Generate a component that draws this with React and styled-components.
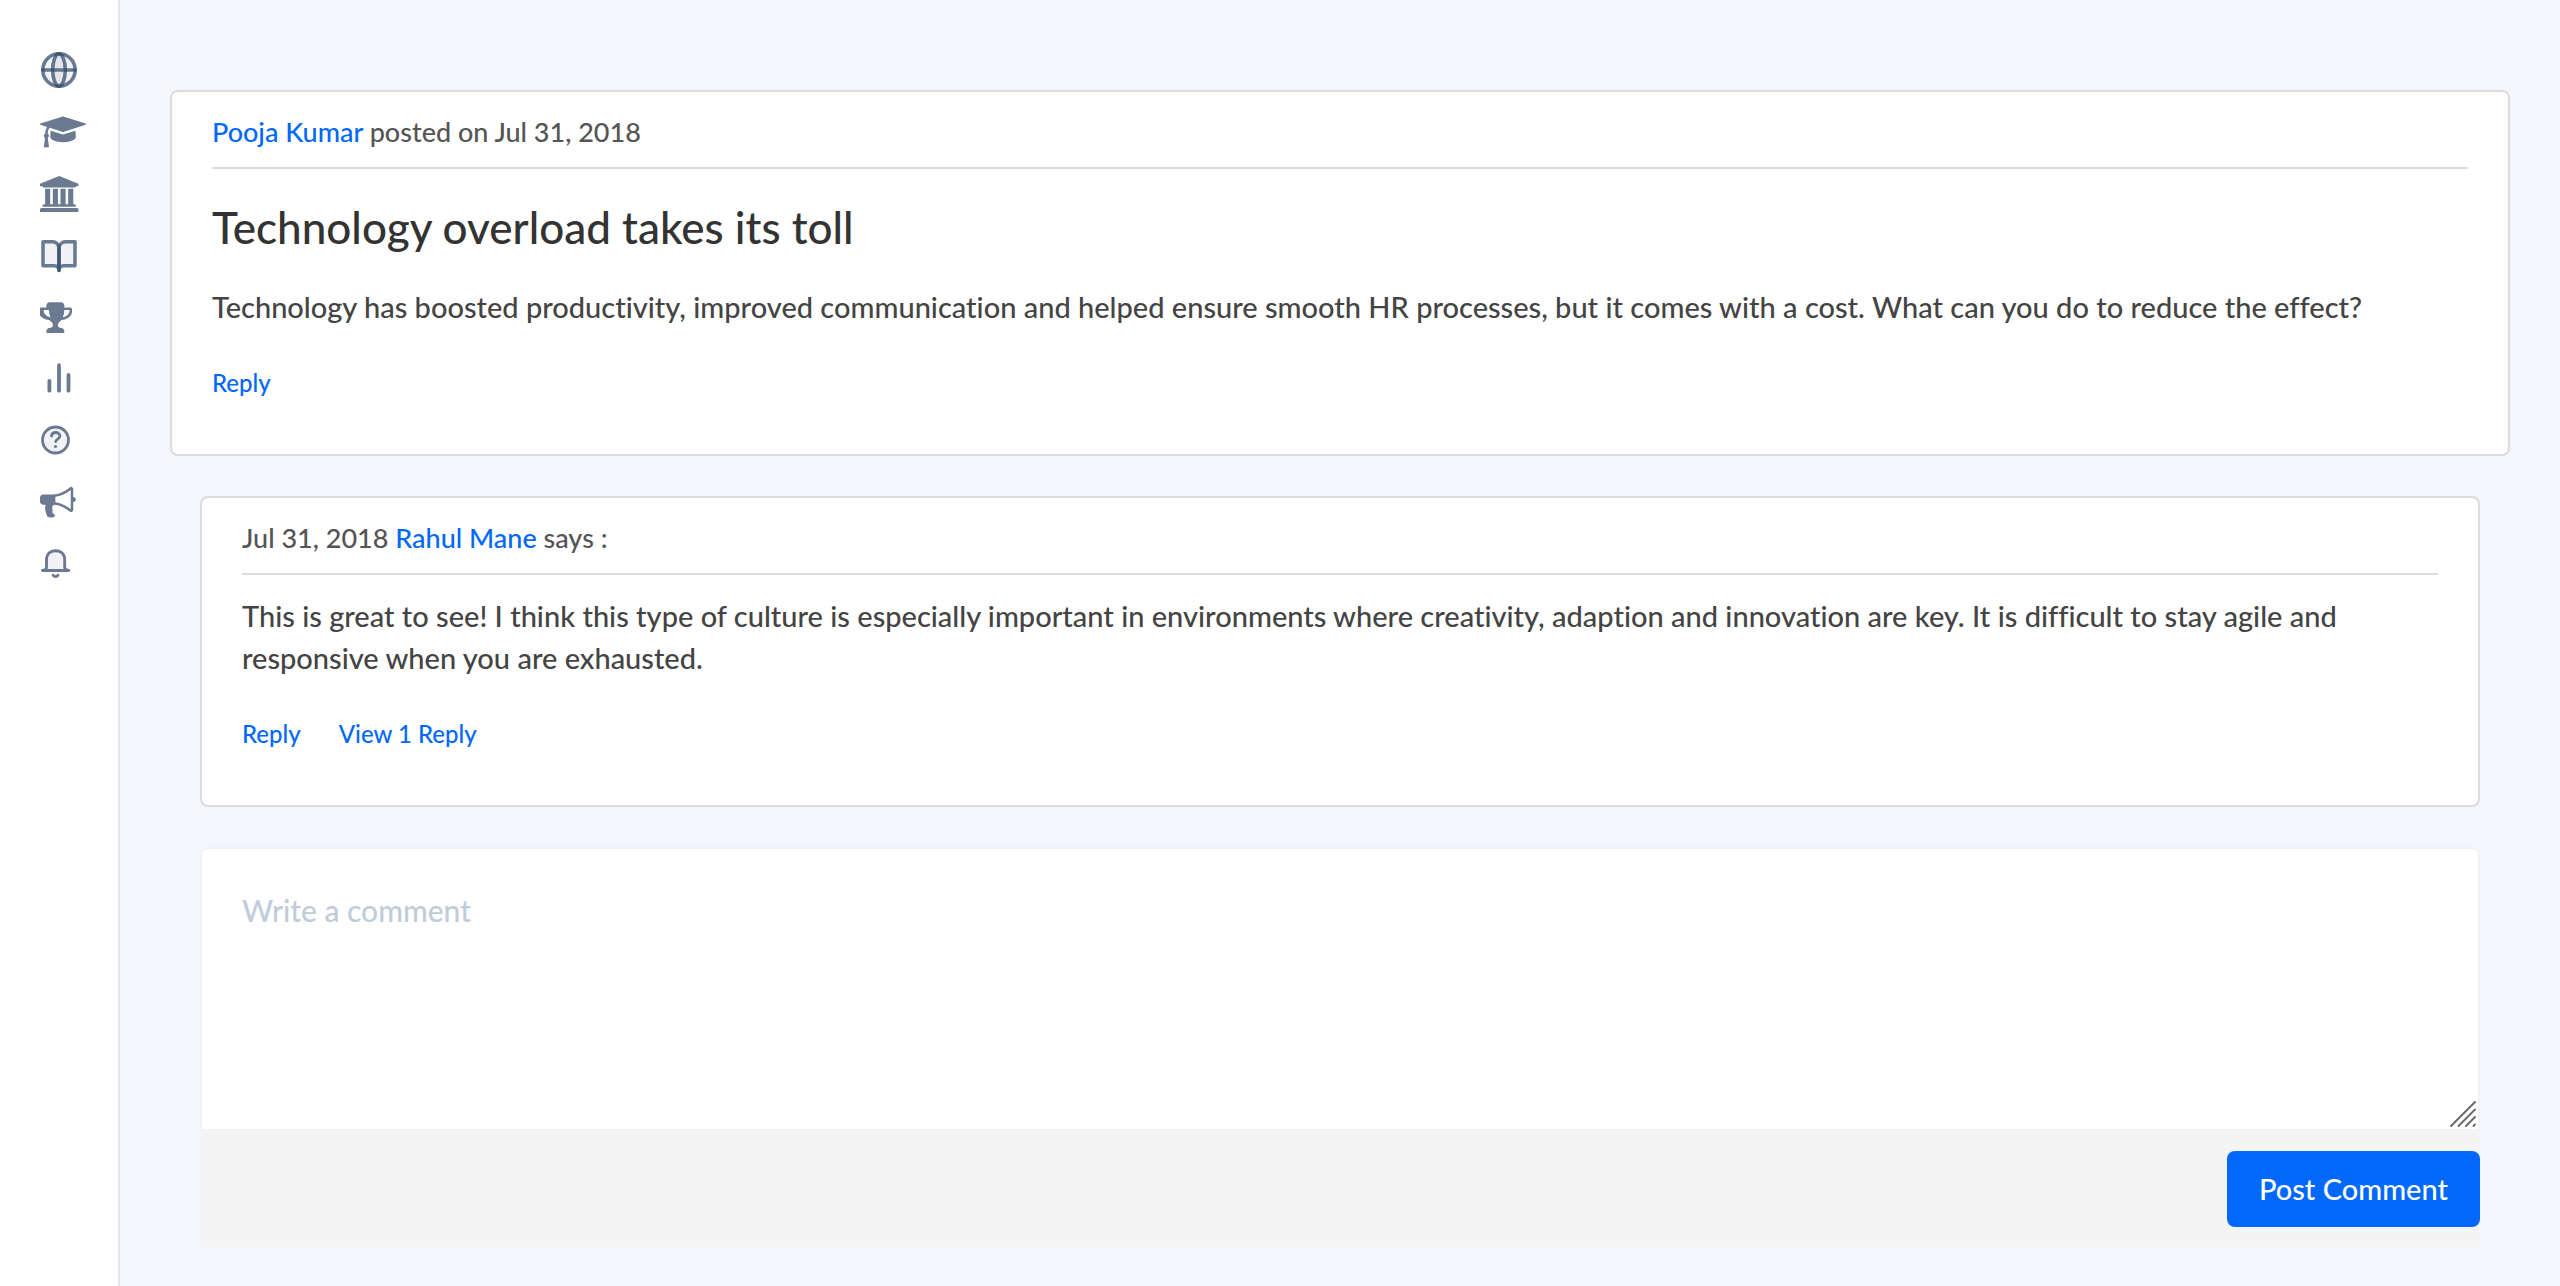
import React, { useState } from 'react';
import styled, { createGlobalStyle } from 'styled-components';

const GlobalStyle = createGlobalStyle`
  * {
    box-sizing: border-box;
  }

  body {
    margin: 0;
    background-color: #f4f6fb;
    color: #444;
    font-family: Lato, 'Open Sans', sans-serif;
    font-size: 29px;
    font-weight: 500;
    font-variant-ligatures: none;
    line-height: 42px;
  }
`;

const Page = styled.div`
  display: flex;
  min-height: 100vh;
`;

const Sidebar = styled.nav`
  flex: 0 0 120px;
  padding: 39px 0 0 40px;
  background-color: white;
  border-right: 2px solid #e3e7f0;
`;

const NavLink = styled.a`
  display: flex;
  align-items: center;
  height: 62px;
`;

const NavIcon = styled.svg`
  width: 48px;
  height: 40px;
  fill: none;
  stroke-linecap: round;
  stroke-linejoin: round;
`;

const Main = styled.main`
  flex: 1;
  min-width: 0;
  padding: 90px 50px 39px;
`;

const Card = styled.article`
  padding: 20px 40px 52px;
  background-color: white;
  border: 2px solid #dcdcdc;
  border-radius: 8px;
`;

const Thread = styled.section`
  display: flex;
  flex-direction: column;
  gap: 40px;
  margin-top: 40px;
  padding: 0 30px;
`;

const Meta = styled.header`
  padding-bottom: 15px;
  border-bottom: 2px solid #dcdcdc;
  color: #555;
  font-size: 27px;
  line-height: 40px;
`;

const Author = styled.a`
  color: #0168fa;
  text-decoration: none;
`;

const Title = styled.h1`
  margin: 33px 0 34px;
  color: #333;
  font-size: 44px;
  font-weight: 500;
  line-height: 50px;
`;

const Text = styled.p`
  margin: ${(props) => (props.$spaced ? '20px 0 0' : '0')};
`;

const Actions = styled.div`
  display: flex;
  gap: 38px;
  margin-top: 37px;
`;

const Action = styled.button`
  padding: 0 0 1px;
  background: none;
  border: none;
  color: #0168fa;
  font: inherit;
  font-size: 24px;
  line-height: 36px;
  cursor: pointer;
`;

const CommentForm = styled.form`
  background-color: #f4f4f4;
  border-radius: 8px;
`;

const Field = styled.div`
  position: relative;
`;

const CommentInput = styled.textarea`
  display: block;
  width: 100%;
  height: 284px;
  padding: 40px;
  background-color: white;
  border: 2px solid #f2f2f2;
  border-radius: 8px 8px 0 0;
  color: #444;
  font: inherit;
  font-size: 30px;
  resize: none;

  &::placeholder {
    color: #c0ccda;
    opacity: 1;
  }
`;

const Grip = styled.svg`
  position: absolute;
  right: 3px;
  bottom: 3px;
  width: 28px;
  height: 28px;
  stroke: #6b6b6b;
  stroke-width: 2;
  stroke-linecap: round;
  pointer-events: none;
`;

const FormFooter = styled.div`
  display: flex;
  justify-content: flex-end;
  padding: 20px 0;
`;

const PostButton = styled.button`
  padding: 17px 32px;
  background-color: #0168fa;
  border: none;
  border-radius: 8px;
  color: white;
  font: inherit;
  cursor: pointer;
`;

const tone = { stroke: 'rgba(49, 74, 107, 0.72)', fill: 'rgba(30, 40, 60, 0.06)' };
const solid = '#6b7a90';

const navItems = [
  {
    name: 'Explore',
    icon: (
      <g {...tone} strokeWidth="3.6">
        <circle cx="19" cy="20" r="16.2" />
        <ellipse cx="19" cy="20" rx="6.3" ry="16.2" />
        <path d="M2.8 20h32.4" />
      </g>
    ),
  },
  {
    name: 'Courses',
    icon: (
      <path
        fill={solid}
        transform="translate(0 2) scale(0.02)"
        d="M1774 836l18 316q4 69-82 128t-235 93.500-323 34.500-323-34.500-235-93.500-82-128l18-316 574 181q22 7 48 7t48-7zM2304 512q0 23-22 31l-1120 352q-4 1-10 1t-10-1l-652-206q-43 34-71 111.500t-34 178.500q63 36 63 109 0 69-58 107l58 433q2 14-8 25-9 11-24 11h-192q-15 0-24-11-10-11-8-25l58-433q-58-38-58-107 0-73 65-111 11-207 98-330l-333-104q-22-8-22-31t22-31l1120-352q4-1 10-1t10 1l1120 352q22 8 22 31z"
      />
    ),
  },
  {
    name: 'Institutes',
    icon: (
      <path
        fill={solid}
        transform="translate(0 -0.5) scale(0.02)"
        d="M960 128l960 384v128h-128q0 26-20.500 45t-48.500 19h-1526q-28 0-48.500-19t-20.500-45h-128v-128zM256 768h256v768h128v-768h256v768h128v-768h256v768h128v-768h256v768h59q28 0 48.500 19t20.500 45v64h-1664v-64q0-26 20.500-45t48.500-19h59v-768zM1851 1728q28 0 48.500 19t20.500 45v128h-1920v-128q0-26 20.500-45t48.500-19h1782z"
      />
    ),
  },
  {
    name: 'Library',
    icon: (
      <g {...tone} strokeWidth="2.2" transform="translate(-0.2 1) scale(1.6)">
        <path d="M2 3h6a4 4 0 0 1 4 4v14a3 3 0 0 0-3-3H2z" />
        <path d="M22 3h-6a4 4 0 0 0-4 4v14a3 3 0 0 1 3-3h7z" />
      </g>
    ),
  },
  {
    name: 'Achievements',
    icon: (
      <path
        fill={solid}
        transform="translate(0 1.7) scale(0.02)"
        d="M522 883q-74-162-74-371h-256v96q0 78 94.500 162t235.500 113zM1472 608v-96h-256q0 209-74 371 141-29 235.500-113t94.500-162zM1600 480v128q0 71-41.500 143t-112 130-173 97.500-215.500 44.500q-42 54-95 95-38 34-52.500 72.500t-14.500 89.500q0 54 30.500 91t97.500 37q75 0 133.500 45.500t58.500 114.500v64q0 14-9 23t-23 9h-832q-14 0-23-9t-9-23v-64q0-69 58.500-114.500t133.500-45.500q67 0 97.500-37t30.500-91q0-51-14.500-89.500t-52.500-72.500q-53-41-95-95-113-5-215.500-44.500t-173-97.500-112-130-41.500-143v-128q0-40 28-68t68-28h288v-96q0-66 47-113t113-47h576q66 0 113 47t47 113v96h288q40 0 68 28t28 68z"
      />
    ),
  },
  {
    name: 'Statistics',
    icon: <path stroke={solid} strokeWidth="3.8" d="M9.4 21v9.7M19 5.2v25.5M28.5 14.8v15.9" />,
  },
  {
    name: 'Help',
    icon: (
      <g {...tone} strokeWidth="2.8">
        <circle cx="15.5" cy="18" r="13" />
        <path fill="none" d="M11.5 14c.2-2.2 1.9-3.5 4.2-3.5 2.4 0 4.2 1.5 4.2 3.6 0 3-3.7 2.9-4.2 5.5" />
        <circle cx="15.5" cy="24.5" r="1.6" fill={solid} stroke="none" />
      </g>
    ),
  },
  {
    name: 'Announcements',
    icon: (
      <path
        fill={solid}
        transform="translate(0 0.2) scale(0.02)"
        d="M1664 640q53 0 90.500 37.500t37.500 90.500-37.500 90.500-90.500 37.500v384q0 52-38 90t-90 38q-417-347-812-380-58 19-91 66t-31 100.500 40 92.500q-20 33-23 65.500t6 58 33.500 55 48 50 61.500 50.500q-29 58-111.500 83t-168.500 11.500-132-55.500q-7-23-29.500-87.500t-32-94.500-23-89-15-101 3.500-98.500 22-110.500h-122q-66 0-113-47t-47-113v-192q0-66 47-113t113-47h480q435 0 896-384 52 0 90 38t38 90v384zM1536 1244v-954q-394 302-768 343v270q377 42 768 341z"
      />
    ),
  },
  {
    name: 'Notifications',
    icon: (
      <g {...tone} stroke={solid} strokeWidth="2.9">
        <path d="M2.5 24.5c2.500 0 4-1.200 4-3.500v-7c0-5.500 3.500-9.200 9.100-9.200s9.100 3.700 9.100 9.200v7c0 2.300 1.500 3.500 4 3.500z" />
        <path fill="none" d="M13.2 29.3c1.200 1.800 3.600 1.800 4.800 0" />
      </g>
    ),
  },
];

function App() {
  const [comment, setComment] = useState('');

  const handleSubmit = (e) => {
    e.preventDefault();
    setComment('');
  };

  return (
    <>
      <GlobalStyle />
      <Page>
        <Sidebar>
          {navItems.map((item) => (
            <NavLink key={item.name} href="#" aria-label={item.name}>
              <NavIcon viewBox="0 0 48 40">{item.icon}</NavIcon>
            </NavLink>
          ))}
        </Sidebar>
        <Main>
          <Card>
            <Meta>
              <Author href="#">Pooja Kumar</Author> posted on Jul 31, 2018
            </Meta>
            <Title>Technology overload takes its toll</Title>
            <Text>
              Technology has boosted productivity, improved communication and helped ensure smooth HR
              processes, but it comes with a cost. What can you do to reduce the effect?
            </Text>
            <Actions>
              <Action type="button">Reply</Action>
            </Actions>
          </Card>
          <Thread>
            <Card>
              <Meta>
                Jul 31, 2018 <Author href="#">Rahul Mane</Author> says :
              </Meta>
              <Text $spaced>
                This is great to see! I think this type of culture is especially important in
                environments where creativity, adaption and innovation are key. It is difficult to
                stay agile and responsive when you are exhausted.
              </Text>
              <Actions>
                <Action type="button">Reply</Action>
                <Action type="button">View 1 Reply</Action>
              </Actions>
            </Card>
            <CommentForm onSubmit={handleSubmit}>
              <Field>
                <CommentInput
                  aria-label="Write a comment"
                  placeholder="Write a comment"
                  value={comment}
                  onChange={(e) => setComment(e.target.value)}
                />
                <Grip viewBox="0 0 28 28" aria-hidden="true">
                  <path d="M2 26L26 2M9.5 26L26 9.5M17 26l9-9M24.5 26l1.5-1.5" />
                </Grip>
              </Field>
              <FormFooter>
                <PostButton type="submit">Post Comment</PostButton>
              </FormFooter>
            </CommentForm>
          </Thread>
        </Main>
      </Page>
    </>
  );
}

export default App;
